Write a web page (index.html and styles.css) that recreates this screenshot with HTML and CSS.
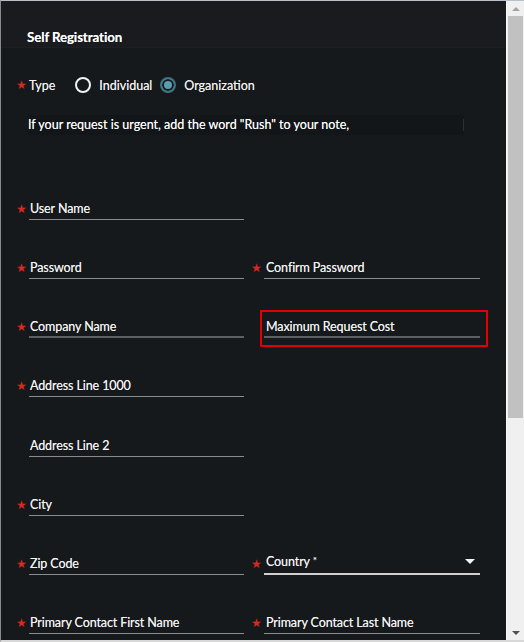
FILE: index.html
```html
<!DOCTYPE html>
<html>
<head>
<meta charset="utf-8">
<link rel="stylesheet" href="styles.css">
</head>
<body>
<div class="modal">
  <div class="content">
    <div class="header"><span class="title">Self Registration</span></div>
    <div class="body">
      <div class="type-row">
        <span class="star">★</span>
        <span class="type-label">Type</span>
        <span class="radio"></span><span class="radio-text">Individual</span>
        <span class="radio checked"></span><span class="radio-text">Organization</span>
      </div>
      <div class="notice"><span>If your request is urgent, add the word "Rush" to your note,</span><span class="caret"></span></div>
      <div class="rows">
        <div class="row">
          <div class="field"><span class="star">★</span><span class="input">User Name</span></div>
          <div></div>
        </div>
        <div class="row">
          <div class="field"><span class="star">★</span><span class="input">Password</span></div>
          <div class="field"><span class="star">★</span><span class="input">Confirm Password</span></div>
        </div>
        <div class="row">
          <div class="field"><span class="star">★</span><span class="input dim">Company Name</span></div>
          <div class="field"><span class="star blank"></span><span class="input dim highlight">Maximum Request Cost</span></div>
        </div>
        <div class="row">
          <div class="field"><span class="star">★</span><span class="input">Address Line 1000</span></div>
          <div></div>
        </div>
        <div class="row">
          <div class="field"><span class="star blank"></span><span class="input">Address Line 2</span></div>
          <div></div>
        </div>
        <div class="row">
          <div class="field"><span class="star">★</span><span class="input">City</span></div>
          <div></div>
        </div>
        <div class="row">
          <div class="field"><span class="star">★</span><span class="input">Zip Code</span></div>
          <div class="field"><span class="star">★</span><span class="input select"><span class="sel-label">Country <sup>*</sup></span><span class="arrow"></span></span></div>
        </div>
        <div class="row">
          <div class="field"><span class="star">★</span><span class="input">Primary Contact First Name</span></div>
          <div class="field"><span class="star">★</span><span class="input">Primary Contact Last Name</span></div>
        </div>
      </div>
    </div>
  </div>
  <div class="scrollbar">
    <div class="sb-btn"><span class="sb-up"></span></div>
    <div class="sb-track"><div class="sb-thumb"></div></div>
    <div class="sb-btn"><span class="sb-down"></span></div>
  </div>
</div>
</body>
</html>
```
FILE: styles.css
```css
html, body {
  margin: 0;
  padding: 0;
  background: #ffffff;
}
body {
  font-family: Lato, "Open Sans", sans-serif;
  font-size: 12px;
  color: #f2f2f2;
}
.modal {
  width: 524px;
  height: 642px;
  box-sizing: border-box;
  border-top: 1px solid #b9c0c8;
  border-left: 1px solid #8a8a8a;
  border-bottom: 2px solid #d8d8d8;
  display: flex;
  overflow: hidden;
}
.content {
  flex: 1;
  background: #16191c;
  overflow: hidden;
  text-shadow: 0 0 0.4px rgba(255, 255, 255, 0.7);
}
.header {
  height: 47px;
  box-sizing: border-box;
  padding: 27px 0 0 26px;
  background: #191b1f;
  border-bottom: 1px solid #1c2025;
}
.title {
  font-weight: 700;
  font-size: 13.3px;
  line-height: 18px;
  color: #ffffff;
  letter-spacing: -0.1px;
}
.body {
  padding: 0 0 0 15px;
}
.type-row {
  display: flex;
  align-items: center;
  height: 20px;
  margin-top: 27px;
}
.star {
  color: #d52a1f;
  font-size: 11.5px;
  width: 13px;
  flex: none;
  line-height: 16px;
  text-shadow: none;
}
.star.blank {
  display: inline-block;
}
.type-label {
  font-size: 12.5px;
  margin-right: 20px;
}
.radio {
  width: 16px;
  height: 16px;
  box-sizing: border-box;
  border: 2px solid #f2f2f2;
  border-radius: 50%;
  margin-right: 8px;
  flex: none;
}
.radio.checked {
  border-color: #3e7482;
  background: #5a9db2;
  box-shadow: inset 0 0 0 2px #16191c;
}
.radio-text {
  font-size: 12.5px;
  margin-right: 8px;
}
.notice {
  margin-top: 20px;
  margin-left: 12px;
  height: 20px;
  line-height: 20px;
  width: 436px;
  background: #131619;
  display: flex;
  justify-content: space-between;
  font-size: 12.5px;
  color: #ffffff;
}
.caret {
  width: 1px;
  height: 12px;
  margin-top: 4px;
  background: #2c2f33;
}
.rows {
  margin-top: 66px;
  display: flex;
  flex-direction: column;
  gap: 40.15px;
}
.row {
  display: grid;
  grid-template-columns: 228px 229px;
  column-gap: 7px;
}
.field {
  display: flex;
  align-items: flex-start;
}
.input {
  flex: 1;
  display: flex;
  align-items: center;
  height: 16px;
  line-height: 16px;
  padding: 0 0 2px 1px;
  border-bottom: 1px solid #8c8c8c;
  font-size: 12.5px;
  color: #f4f4f4;
  letter-spacing: -0.1px;
}
.row > .field:nth-child(2) .input {
  padding-left: 2px;
}
.input.dim {
  border-bottom: 2px solid #5e5f61;
  padding-bottom: 1px;
}
.input.highlight {
  position: relative;
}
.input.highlight::after {
  content: "";
  position: absolute;
  left: -4px;
  right: -8px;
  top: -9px;
  bottom: -11px;
  border: 2px solid #e00000;
}
.input.select {
  justify-content: space-between;
  border-bottom: 2px solid #d0d0d0;
  padding-bottom: 1px;
  padding-right: 5px;
}
.sel-label {
  margin-top: -3px;
}
.sel-label sup {
  font-size: 10px;
  vertical-align: top;
  line-height: 12px;
}
.arrow {
  width: 0;
  height: 0;
  border-left: 5px solid transparent;
  border-right: 5px solid transparent;
  border-top: 5px solid #f4f4f4;
  margin-top: -4px;
}
.scrollbar {
  width: 17px;
  flex: none;
  background: #f0f0f0;
  border-left: 1px solid #fafafa;
  display: flex;
  flex-direction: column;
}
.sb-btn {
  height: 15px;
  display: flex;
  align-items: center;
  justify-content: center;
}
.sb-up {
  width: 0;
  height: 0;
  border-left: 4px solid transparent;
  border-right: 4px solid transparent;
  border-bottom: 4px solid #a3a3a3;
}
.sb-down {
  width: 0;
  height: 0;
  border-left: 4px solid transparent;
  border-right: 4px solid transparent;
  border-top: 4px solid #505050;
}
.sb-track {
  flex: 1;
  padding: 0 1px;
}
.sb-thumb {
  height: 402px;
  background: #c1c1c1;
}
```
